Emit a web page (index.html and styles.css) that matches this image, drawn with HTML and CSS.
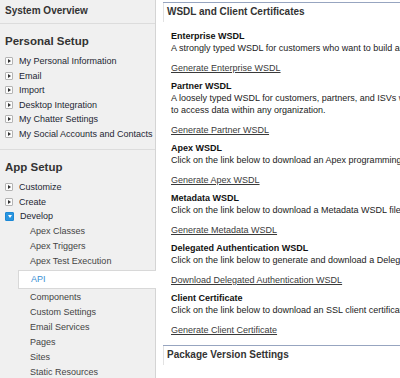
FILE: index.html
```html
<!DOCTYPE html>
<html lang="en">
<head>
  <meta charset="UTF-8">
  <title>WSDL and Client Certificates</title>
  <link rel="stylesheet" href="styles.css">
</head>
<body>
  <div class="page">
    <!-- Setup sidebar -->
    <div class="sidebar">
      <div class="sys">System Overview</div>

      <div class="group">
        <h2>Personal Setup</h2>
        <ul class="nav">
          <li><span class="tw"></span>My Personal Information</li>
          <li><span class="tw"></span>Email</li>
          <li><span class="tw"></span>Import</li>
          <li><span class="tw"></span>Desktop Integration</li>
          <li><span class="tw"></span>My Chatter Settings</li>
          <li><span class="tw"></span>My Social Accounts and Contacts</li>
        </ul>
      </div>

      <div class="group last">
        <h2>App Setup</h2>
        <ul class="nav">
          <li><span class="tw"></span>Customize</li>
          <li><span class="tw"></span>Create</li>
          <li><span class="tw open"></span>Develop</li>
        </ul>
        <ul class="sub">
          <li>Apex Classes</li>
          <li>Apex Triggers</li>
          <li>Apex Test Execution</li>
          <li class="active">API</li>
          <li>Components</li>
          <li>Custom Settings</li>
          <li>Email Services</li>
          <li>Pages</li>
          <li>Sites</li>
          <li>Static Resources</li>
        </ul>
      </div>
    </div>

    <!-- Main content -->
    <div class="main">
      <div class="panel">
        <div class="panel-title">WSDL and Client Certificates</div>

        <div class="item">
          <h3>Enterprise WSDL</h3>
          <p>A strongly typed WSDL for customers who want to build an integration with their organization only.</p>
          <a href="#">Generate Enterprise WSDL</a>
        </div>

        <div class="item">
          <h3>Partner WSDL</h3>
          <p>A loosely typed WSDL for customers, partners, and ISVs who are building client applications for multiple organizations. It can be used<br>to access data within any organization.</p>
          <a href="#">Generate Partner WSDL</a>
        </div>

        <div class="item">
          <h3>Apex WSDL</h3>
          <p>Click on the link below to download an Apex programming WSDL file.</p>
          <a href="#">Generate Apex WSDL</a>
        </div>

        <div class="item">
          <h3>Metadata WSDL</h3>
          <p>Click on the link below to download a Metadata WSDL file.</p>
          <a href="#">Generate Metadata WSDL</a>
        </div>

        <div class="item">
          <h3>Delegated Authentication WSDL</h3>
          <p>Click on the link below to generate and download a Delegated Authentication WSDL file.</p>
          <a href="#">Download Delegated Authentication WSDL</a>
        </div>

        <div class="item">
          <h3>Client Certificate</h3>
          <p>Click on the link below to download an SSL client certificate.</p>
          <a href="#">Generate Client Certificate</a>
        </div>
      </div>

      <div class="panel next">
        <div class="panel-title">Package Version Settings</div>
      </div>
    </div>
  </div>
</body>
</html>
```

FILE: styles.css
```css
/* Page frame */
html, body {
  margin: 0;
  height: 100%;
  overflow: hidden;
}
body {
  font-family: "Liberation Sans", Arial, sans-serif;
  font-size: 9px;
  color: #222;
  background-color: #fff;
}
.page {
  display: flex;
  height: 100%;
}

/* Sidebar */
.sidebar {
  width: 155px;
  flex-shrink: 0;
  background-color: #f0f0f0;
  border-right: 1px solid #d4d4d4;
}
.sys {
  height: 23px;
  line-height: 21px;
  padding-left: 5px;
  font-size: 10px;
  font-weight: bold;
  color: #333;
  border-bottom: 1px solid #dcdcdc;
}
.group {
  padding: 10px 0 8px;
  border-bottom: 1px solid #dcdcdc;
}
.group.last {
  border-bottom: none;
  padding-bottom: 0;
}
.group h2 {
  margin: 0 0 6px;
  padding-left: 5px;
  font-size: 11.5px;
  line-height: 14px;
  color: #333;
}
.nav, .sub {
  list-style: none;
  margin: 0;
  padding: 0;
}
.nav li {
  display: flex;
  align-items: center;
  height: 14.5px;
  padding-left: 5px;
  color: #1d2633;
  white-space: nowrap;
}
.tw {
  width: 6px;
  height: 6px;
  margin-right: 6px;
  border: 1px solid #b4b4b4;
  border-radius: 1px;
  background-color: #fcfcfc;
  position: relative;
}
.tw::after {
  content: "";
  position: absolute;
  left: 2px;
  top: 1px;
  border-left: 3px solid #333;
  border-top: 2px solid transparent;
  border-bottom: 2px solid transparent;
}
.tw.open {
  width: 7px;
  height: 7px;
  border-color: #1b88d6;
  background-color: #2a95df;
}
.tw.open::after {
  left: 1.5px;
  top: 2.5px;
  border-left: 2px solid transparent;
  border-right: 2px solid transparent;
  border-top: 3px solid #fff;
  border-bottom: none;
}
.sub li {
  height: 15px;
  line-height: 15px;
  padding-left: 30px;
  color: #444;
}
.sub li.active {
  height: 17px;
  line-height: 17px;
  margin: 1px -1px 1px 18px;
  padding-left: 12px;
  background-color: #fff;
  border: 1px solid #d8d8d8;
  border-right: none;
  color: #3a8fd4;
  position: relative;
}

/* Main content */
.main {
  flex: 1;
  min-width: 0;
  padding: 2px 0 0 7px;
}
.panel {
  border-top: 1px solid #97a5c0;
}
.panel-title {
  height: 19px;
  line-height: 18px;
  padding-left: 3px;
  margin-bottom: 8px;
  font-size: 10px;
  font-weight: bold;
  color: #333;
  border-left: 1px solid #e2e2e2;
}
.item {
  padding: 0 0 0 8px;
  margin-bottom: 6px;
  white-space: nowrap;
}
.item h3 {
  margin: 0;
  font-size: 9px;
  line-height: 12px;
  color: #111;
}
.item p {
  margin: 0 0 8px;
  line-height: 12px;
  color: #222;
}
.item a {
  display: block;
  line-height: 12px;
  color: #3a3a3a;
}
.panel.next {
  margin-top: 9px;
}
```
